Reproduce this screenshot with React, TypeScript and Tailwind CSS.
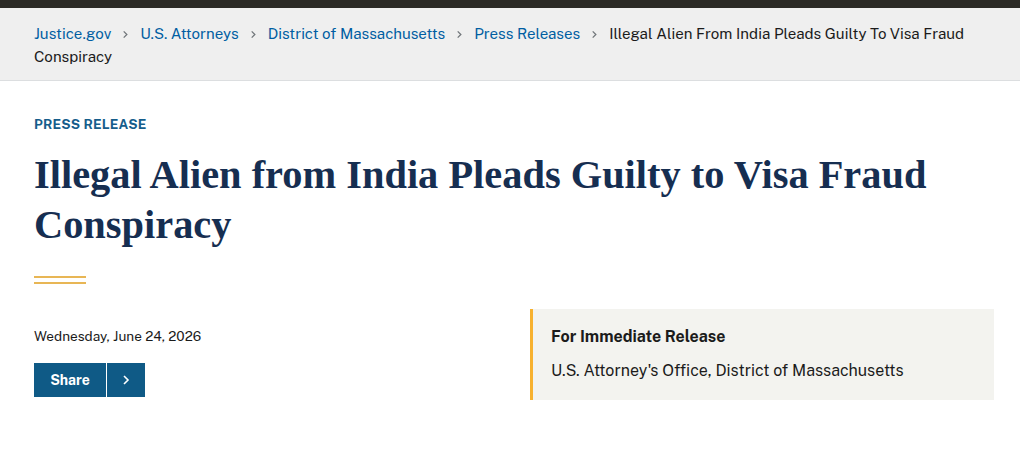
import React from "react";

const Chev = () => (
  <svg width="9" height="9" viewBox="0 0 10 10" className="inline-block mx-[10px] align-middle relative -top-[1px]">
    <path d="M3 1.5 L6.5 5 L3 8.5" fill="none" stroke="#71767a" strokeWidth="1.4" />
  </svg>
);

export default function App() {
  const sans = { fontFamily: '"Public Sans", Inter, "Liberation Sans", sans-serif' };
  return (
    <div className="w-[1020px] h-[457px] bg-white overflow-hidden" style={sans}>
      <div className="h-[8px] bg-[#2b2a26]" />
      <div className="bg-[#efefef] border-b border-[#dcdee0] px-[34px] pt-[14px] pb-[12px]">
        <div className="text-[15.1px] leading-[23px] text-[#1b1b1b]">
          <a className="text-[#005ea2]">Justice.gov</a>
          <Chev />
          <a className="text-[#005ea2]">U.S. Attorneys</a>
          <Chev />
          <a className="text-[#005ea2]">District of Massachusetts</a>
          <Chev />
          <a className="text-[#005ea2]">Press Releases</a>
          <Chev />
          <span>Illegal Alien From India Pleads Guilty To Visa Fraud Conspiracy</span>
        </div>
      </div>
      <div className="px-[34px] pt-[33px]">
        <div className="text-[13.5px] leading-[20px] font-bold text-[#155d8b] tracking-[0.01em]">PRESS RELEASE</div>
        <h1
          className="mt-[16px] text-[40.4px] leading-[50px] font-bold text-[#162e51]"
          style={{ fontFamily: '"Source Serif Pro", "Liberation Serif", serif' }}
        >
          Illegal Alien from India Pleads Guilty to Visa Fraud Conspiracy
        </h1>
        <div className="mt-[26px] w-[52px] flex flex-col gap-[4px]">
          <div className="h-[2px] bg-[#e8b655]" />
          <div className="h-[2px] bg-[#e8b655]" />
        </div>
        <div className="mt-[25px] grid grid-cols-[496px_464px]">
          <div className="pt-[17px]">
            <div className="text-[13.6px] leading-[20px] text-[#1b1b1b]">Wednesday, June 24, 2026</div>
            <div className="mt-[17px] flex h-[34px] w-[111px] bg-[#0f5a86] text-white">
              <div className="w-[73px] flex items-center justify-center font-bold text-[14px] border-r border-white">Share</div>
              <div className="flex-1 flex items-center justify-center">
                <svg width="10" height="12" viewBox="0 0 10 12">
                  <path d="M3 2 L7 6 L3 10" fill="none" stroke="white" strokeWidth="1.6" />
                </svg>
              </div>
            </div>
          </div>
          <div className="border-l-[3px] border-[#f7b12f] bg-[#f3f3ef] pl-[18px] pt-[17px] pb-[18px] text-[16px] leading-[22px] text-[#1b1b1b]">
            <div className="font-bold">For Immediate Release</div>
            <div className="mt-[12px]">U.S. Attorney's Office, District of Massachusetts</div>
          </div>
        </div>
      </div>
    </div>
  );
}
